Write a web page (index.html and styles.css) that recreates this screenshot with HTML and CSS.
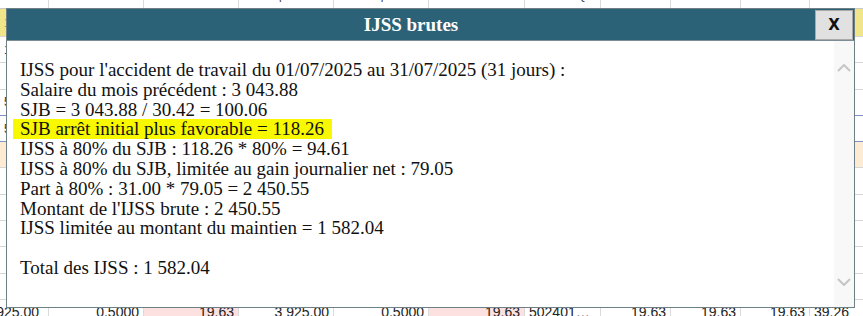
FILE: index.html
```html
<!DOCTYPE html>
<html lang="fr">
<head>
<meta charset="utf-8">
<title>IJSS brutes</title>
<link rel="stylesheet" href="styles.css">
</head>
<body>
<div class="sheet">
  <div class="row head">
    <div class="c">ssier</div><div class="c r">salarial</div><div class="c r">salarial</div><div class="c r">patronale</div><div class="c r">patronal</div><div class="c">Code</div><div class="c r">Qté</div><div class="c r">Taux sal</div><div class="c r">Mt</div><div class="c r">Ta</div><div class="c">M</div>
  </div>
  <div class="row y"><div class="c">1</div><div class="c"></div><div class="c"></div><div class="c"></div><div class="c"></div><div class="c"></div><div class="c"></div><div class="c"></div><div class="c"></div><div class="c"></div><div class="c"></div></div>
  <div class="row"><div class="c">1</div><div class="c"></div><div class="c"></div><div class="c"></div><div class="c"></div><div class="c"></div><div class="c"></div><div class="c"></div><div class="c"></div><div class="c"></div><div class="c"></div></div>
  <div class="row"><div class="c"></div><div class="c"></div><div class="c"></div><div class="c"></div><div class="c"></div><div class="c"></div><div class="c"></div><div class="c"></div><div class="c"></div><div class="c"></div><div class="c"></div></div>
  <div class="row blue"><div class="c">5</div><div class="c"></div><div class="c"></div><div class="c"></div><div class="c"></div><div class="c"></div><div class="c"></div><div class="c"></div><div class="c"></div><div class="c"></div><div class="c"></div></div>
  <div class="row blue"><div class="c">5</div><div class="c"></div><div class="c"></div><div class="c"></div><div class="c"></div><div class="c"></div><div class="c"></div><div class="c"></div><div class="c"></div><div class="c"></div><div class="c"></div></div>
  <div class="row peach"><div class="c"></div><div class="c"></div><div class="c"></div><div class="c"></div><div class="c"></div><div class="c"></div><div class="c"></div><div class="c"></div><div class="c"></div><div class="c"></div><div class="c"></div></div>
  <div class="row"><div class="c"></div><div class="c"></div><div class="c"></div><div class="c"></div><div class="c"></div><div class="c"></div><div class="c"></div><div class="c"></div><div class="c"></div><div class="c"></div><div class="c"></div></div>
  <div class="row"><div class="c"></div><div class="c"></div><div class="c"></div><div class="c"></div><div class="c"></div><div class="c"></div><div class="c"></div><div class="c"></div><div class="c"></div><div class="c"></div><div class="c"></div></div>
  <div class="row"><div class="c"></div><div class="c"></div><div class="c"></div><div class="c"></div><div class="c"></div><div class="c"></div><div class="c"></div><div class="c"></div><div class="c"></div><div class="c"></div><div class="c"></div></div>
  <div class="row"><div class="c"></div><div class="c"></div><div class="c"></div><div class="c"></div><div class="c"></div><div class="c"></div><div class="c"></div><div class="c"></div><div class="c"></div><div class="c"></div><div class="c"></div></div>
  <div class="row"><div class="c"></div><div class="c"></div><div class="c"></div><div class="c"></div><div class="c"></div><div class="c"></div><div class="c"></div><div class="c"></div><div class="c"></div><div class="c"></div><div class="c"></div></div>
  <div class="row data">
    <div class="c r">3 925.00</div><div class="c r">0.5000</div><div class="c r pink">19.63</div><div class="c r">3 925.00</div><div class="c r">0.5000</div><div class="c r pink">19.63</div><div class="c">502401…</div><div class="c r">19.63</div><div class="c r">19.63</div><div class="c r">19.63</div><div class="c">39.26</div>
  </div>
</div>

<div class="dialog">
  <div class="titlebar">
    <div class="title">IJSS brutes</div>
    <button class="close">X</button>
  </div>
  <div class="body">
    <div class="text">
      <div>IJSS pour l'accident de travail du 01/07/2025 au 31/07/2025 (31 jours) :</div>
      <div>Salaire du mois précédent : 3 043.88</div>
      <div>SJB = 3 043.88 / 30.42 = 100.06</div>
      <div><span class="hl">SJB arrêt initial plus favorable = 118.26</span></div>
      <div>IJSS à 80% du SJB : 118.26 * 80% = 94.61</div>
      <div>IJSS à 80% du SJB, limitée au gain journalier net : 79.05</div>
      <div>Part à 80% : 31.00 * 79.05 = 2 450.55</div>
      <div>Montant de l'IJSS brute : 2 450.55</div>
      <div>IJSS limitée au montant du maintien = 1 582.04</div>
      <div>&nbsp;</div>
      <div>Total des IJSS : 1 582.04</div>
    </div>
    <div class="scrollbar">
      <svg width="14" height="8" viewBox="0 0 14 8"><path d="M1 7 L7 1 L13 7" fill="none" stroke="#c6c6c6" stroke-width="2"/></svg>
      <svg width="14" height="8" viewBox="0 0 14 8"><path d="M1 1 L7 7 L13 1" fill="none" stroke="#c6c6c6" stroke-width="2"/></svg>
    </div>
  </div>
</div>
</body>
</html>
```
FILE: styles.css
```css
html, body {
  margin: 0;
  padding: 0;
  background: #fff;
  overflow: hidden;
  width: 863px;
  height: 316px;
}
body {
  position: relative;
  font-family: "Liberation Sans", Arial, sans-serif;
}
.sheet {
  display: flex;
  flex-direction: column;
  margin-top: -19px;
  width: 880px;
}
.row {
  display: grid;
  grid-template-columns: 49px 95px 95px 95px 95px 96px 76px 70px 70px 69px 70px;
  height: 26.3px;
  border-bottom: 1px solid #d6d6d6;
  box-sizing: border-box;
  font-size: 12px;
  color: #333;
}
.row.head {
  height: 28px;
  border-bottom: 1px solid #c8c8c8;
  color: #444;
}
.row.y {
  height: 28px;
  background: #f1e58a;
  color: #c88a2a;
}
.row.blue { border-bottom-color: #7d92c8; }
.row.peach { background: #fdebd3; }
.c {
  border-right: 1px solid #dadada;
  padding: 0 4px;
  display: flex;
  align-items: center;
  white-space: nowrap;
  overflow: hidden;
}
.c.r { justify-content: flex-end; }
.row.data { height: 26px; font-size: 14px; color: #222; }
.row.data .c:first-child { justify-content: flex-end; padding-right: 9px; }
.pink { background: #fde0e0; }

.dialog {
  position: absolute;
  left: 6px;
  top: 8px;
  width: 849px;
  height: 300px;
  box-sizing: border-box;
  border: 1px solid #6f7f86;
  background: #fff;
  display: flex;
  flex-direction: column;
}
.titlebar {
  height: 32px;
  background: #2c6278;
  border-bottom: 1px solid #7d8d93;
  display: flex;
  align-items: center;
  box-sizing: border-box;
}
.title {
  flex: 1;
  text-align: center;
  color: #fff;
  font-family: "Liberation Serif", "Times New Roman", serif;
  font-weight: bold;
  font-size: 19px;
}
.close {
  width: 38px;
  height: 30px;
  margin-right: 1px;
  background: #e1e1e1;
  border: 1px solid #a9a9a9;
  font-family: "DejaVu Sans", Verdana, sans-serif;
  font-weight: bold;
  font-size: 15px;
  color: #111;
  padding: 0;
}
.body {
  flex: 1;
  display: flex;
}
.text {
  flex: 1;
  padding: 19px 0 0 13px;
  font-family: "Liberation Serif", "Times New Roman", serif;
  font-size: 19px;
  line-height: 19.8px;
  color: #111;
}
.hl {
  background: #f8f800;
  margin-left: -7px;
  padding: 0 8px 0 7px;
  display: inline-block;
}
.scrollbar {
  width: 20px;
  background: #f8f8f8;
  display: flex;
  flex-direction: column;
  justify-content: space-between;
  align-items: center;
  padding: 23px 0 21px;
}
```
